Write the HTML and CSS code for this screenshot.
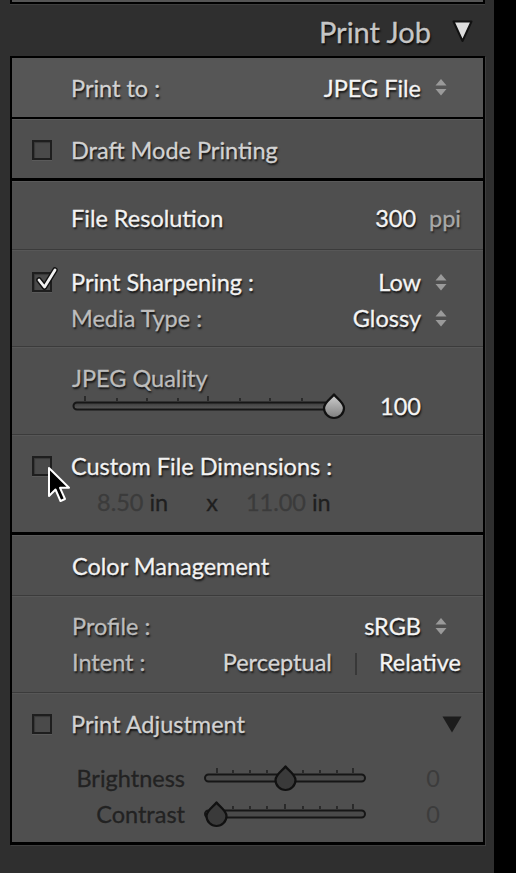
FILE: index.html
```html
<!DOCTYPE html>
<html>
<head>
<meta charset="utf-8">
<link rel="stylesheet" href="styles.css">
</head>
<body>
<div class="screen">
  <div class="main">
    <div class="prev"></div>
    <div class="header">
      <span class="title">Print Job</span>
      <svg class="htri" width="21" height="23" viewBox="0 0 21 23"><polygon points="1.5,1.5 19.5,1.5 10.5,21" fill="#dcdcdc" stroke="#111" stroke-width="2" stroke-linejoin="round"/></svg>
    </div>
    <div class="panel">
      <div class="sec s1">
        <div class="row">
          <span class="lbl c-soft">Print to :</span>
          <span class="val">JPEG File</span>
          <svg class="stepper" width="12" height="17" viewBox="0 0 12 17"><polygon points="6,0 11.5,6.5 0.5,6.5" fill="#9a9a9a"/><polygon points="0.5,10 11.5,10 6,16.5" fill="#9a9a9a"/></svg>
        </div>
      </div>
      <div class="sec s2">
        <div class="row crow">
          <span class="cbox"></span>
          <span class="lbl c-soft">Draft Mode Printing</span>
        </div>
      </div>
      <div class="sec s3">
        <div class="row">
          <span class="lbl c-bright">File Resolution</span>
          <span class="val">300</span>
          <span class="unit">ppi</span>
        </div>
      </div>
      <div class="sec s4">
        <div class="row crow">
          <span class="cbox">
            <svg class="check" width="26" height="26" viewBox="0 0 26 26"><path d="M5 13 L10.5 20 L21 3" fill="none" stroke="#111" stroke-width="5.5" stroke-linecap="round" stroke-linejoin="round"/><path d="M5 13 L10.5 20 L21 3" fill="none" stroke="#f2f2f2" stroke-width="2.8" stroke-linecap="round" stroke-linejoin="round"/></svg>
          </span>
          <span class="lbl c-bright">Print Sharpening :</span>
          <span class="val">Low</span>
          <svg class="stepper" width="12" height="17" viewBox="0 0 12 17"><polygon points="6,0 11.5,6.5 0.5,6.5" fill="#9a9a9a"/><polygon points="0.5,10 11.5,10 6,16.5" fill="#9a9a9a"/></svg>
        </div>
        <div class="row">
          <span class="lbl c-mid">Media Type :</span>
          <span class="val">Glossy</span>
          <svg class="stepper" width="12" height="17" viewBox="0 0 12 17"><polygon points="6,0 11.5,6.5 0.5,6.5" fill="#9a9a9a"/><polygon points="0.5,10 11.5,10 6,16.5" fill="#9a9a9a"/></svg>
        </div>
      </div>
      <div class="sec s5">
        <div class="row short">
          <span class="lbl c-mid lbl72">JPEG Quality</span>
        </div>
        <div class="row short">
          <svg class="jslider" width="276" height="28" viewBox="0 0 276 28">
            <defs>
              <linearGradient id="tg" x1="0" y1="0" x2="0" y2="1">
                <stop offset="0" stop-color="#3c3c3c"/>
                <stop offset="1" stop-color="#5c5c5c"/>
              </linearGradient>
              <linearGradient id="kg" x1="0" y1="0" x2="0" y2="1">
                <stop offset="0" stop-color="#d0d0d0"/>
                <stop offset="1" stop-color="#7e7e7e"/>
              </linearGradient>
            </defs>
            <g stroke="#1c1c1c" stroke-width="1.4">
              <line x1="13" y1="4" x2="13" y2="9"/>
              <line x1="45" y1="6" x2="45" y2="9"/>
              <line x1="75" y1="6" x2="75" y2="9"/>
              <line x1="106" y1="6" x2="106" y2="9"/>
              <line x1="136" y1="4" x2="136" y2="9"/>
              <line x1="168" y1="6" x2="168" y2="9"/>
              <line x1="198" y1="6" x2="198" y2="9"/>
              <line x1="230" y1="6" x2="230" y2="9"/>
            </g>
            <rect x="1.5" y="10.5" width="268" height="7" rx="3.5" fill="url(#tg)" stroke="#161616" stroke-width="2"/>
            <path d="M262 2.5 C265 6.5 272 10.5 272 16 A10 10 0 0 1 252 16 C252 10.5 259 6.5 262 2.5 Z" fill="url(#kg)" stroke="#111" stroke-width="2.2" stroke-linejoin="round"/>
          </svg>
          <span class="val v100">100</span>
        </div>
      </div>
      <div class="sec s6">
        <div class="row crow">
          <span class="cbox"></span>
          <span class="lbl c-bright">Custom File Dimensions :</span>
        </div>
        <div class="row dims">
          <span class="dnum d1">8.50</span><span class="dunit">in</span>
          <span class="dx">x</span>
          <span class="dnum d2">11.00</span><span class="dunit">in</span>
        </div>
      </div>
      <div class="sec s7">
        <div class="row">
          <span class="lbl c-bright lbl72">Color Management</span>
        </div>
      </div>
      <div class="sec s8">
        <div class="row">
          <span class="lbl c-mid lbl72">Profile :</span>
          <span class="val">sRGB</span>
          <svg class="stepper" width="12" height="17" viewBox="0 0 12 17"><polygon points="6,0 11.5,6.5 0.5,6.5" fill="#9a9a9a"/><polygon points="0.5,10 11.5,10 6,16.5" fill="#9a9a9a"/></svg>
        </div>
        <div class="row intent">
          <span class="lbl c-mid lbl72">Intent :</span>
          <span class="opt perc">Perceptual</span>
          <span class="vsep"></span>
          <span class="opt rel">Relative</span>
        </div>
      </div>
      <div class="sec s9">
        <div class="row crow">
          <span class="cbox"></span>
          <span class="lbl c-soft">Print Adjustment</span>
          <svg class="ptri" width="20" height="17" viewBox="0 0 20 17"><polygon points="0.5,0.5 19.5,0.5 10,16.5" fill="#1c1c1c"/></svg>
        </div>
        <div class="adj">
          <div class="arow">
            <span class="alabel">Brightness</span>
            <svg class="aslider" width="165" height="28" viewBox="0 0 165 28">
              <g stroke="#1c1c1c" stroke-width="1.4">
                <line x1="14" y1="4" x2="14" y2="9"/>
                <line x1="30" y1="6" x2="30" y2="9"/>
                <line x1="47" y1="6" x2="47" y2="9"/>
                <line x1="64" y1="6" x2="64" y2="9"/>
                <line x1="100" y1="6" x2="100" y2="9"/>
                <line x1="117" y1="6" x2="117" y2="9"/>
                <line x1="134" y1="6" x2="134" y2="9"/>
                <line x1="150" y1="4" x2="150" y2="9"/>
              </g>
              <rect x="2" y="10.5" width="160" height="7" rx="3.5" fill="#4a4a4a" stroke="#161616" stroke-width="2"/>
              <path d="M82.5 2.5 C85.5 6.5 92.5 10.5 92.5 16 A10 10 0 0 1 72.5 16 C72.5 10.5 79.5 6.5 82.5 2.5 Z" fill="#3a3a3a" stroke="#111" stroke-width="2.2" stroke-linejoin="round"/>
            </svg>
            <span class="aval">0</span>
          </div>
          <div class="arow">
            <span class="alabel">Contrast</span>
            <svg class="aslider" width="165" height="28" viewBox="0 0 165 28">
              <g stroke="#1c1c1c" stroke-width="1.4">
                <line x1="30" y1="6" x2="30" y2="9"/>
                <line x1="47" y1="6" x2="47" y2="9"/>
                <line x1="64" y1="6" x2="64" y2="9"/>
                <line x1="82" y1="4" x2="82" y2="9"/>
                <line x1="100" y1="6" x2="100" y2="9"/>
                <line x1="117" y1="6" x2="117" y2="9"/>
                <line x1="134" y1="6" x2="134" y2="9"/>
                <line x1="150" y1="4" x2="150" y2="9"/>
              </g>
              <rect x="2" y="10.5" width="160" height="7" rx="3.5" fill="#4a4a4a" stroke="#161616" stroke-width="2"/>
              <path d="M13.5 2.5 C16.5 6.5 23.5 10.5 23.5 16 A10 10 0 0 1 3.5 16 C3.5 10.5 10.5 6.5 13.5 2.5 Z" fill="#3a3a3a" stroke="#111" stroke-width="2.2" stroke-linejoin="round"/>
            </svg>
            <span class="aval">0</span>
          </div>
        </div>
      </div>
    </div>
  </div>
  <div class="strip"></div>
  <svg class="cursor" width="28" height="40" viewBox="0 0 28 40"><path d="M2 2 L2 30 L8.5 23.5 L13.5 35 L18 33 L13 21.8 L22 21.8 Z" fill="#000" stroke="#fff" stroke-width="2" stroke-linejoin="round"/></svg>
</div>
</body>
</html>
```
FILE: styles.css
```css
* { box-sizing: border-box; margin: 0; padding: 0; }
html, body { width: 516px; height: 873px; overflow: hidden; }
body { background: #000; font-family: Lato, "Open Sans", sans-serif; font-size: 23.5px; }

.screen { display: flex; height: 873px; position: relative; }
.main { width: 494px; height: 873px; background: #2f2f2f; }
.strip { flex: 1; background: #000; }

.prev {
  margin-left: 10px; width: 475px; height: 4px;
  background: #555;
  border-left: 2px solid #000; border-right: 2px solid #000; border-bottom: 2px solid #000;
  box-shadow: 0 1px 0 #3e3e3e;
}

.header {
  height: 52px; display: flex; justify-content: flex-end; align-items: center;
  padding: 2px 21px 0 0; gap: 21px;
}
.title { font-size: 29px; color: #c6c6c6; text-shadow: 1px 2px 2px rgba(0,0,0,.85); -webkit-text-stroke: 0.3px #c6c6c6; }
.htri { display: block; }

.panel {
  margin-left: 10px; width: 475px;
  border: 2px solid #000; border-bottom-width: 3px;
  background: #4f4f4f;
  box-shadow: 1px 1px 0 #3e3e3e;
}

.sec { display: flex; flex-direction: column; }
.s1 { height: 59px; background: #565656; justify-content: center; }
.s2 { height: 61px; border-top: 2px solid #000; box-shadow: inset 0 1px 0 #5c5c5c; padding-top: 13px; }
.s3 { height: 71px; border-top: 3px solid #000; box-shadow: inset 0 1px 0 #5a5a5a; padding-top: 19px; }
.s4 { height: 97px; border-top: 1px solid #3b3b3b; box-shadow: inset 0 1px 0 #575757; padding-top: 14px; }
.s5 { height: 88px; border-top: 1px solid #3b3b3b; box-shadow: inset 0 1px 0 #575757; padding-top: 17px; }
.s6 { height: 98px; border-top: 1px solid #3b3b3b; box-shadow: inset 0 1px 0 #575757; padding-top: 13px; }
.s7 { height: 63px; border-top: 3px solid #000; box-shadow: inset 0 1px 0 #5a5a5a; padding-top: 13px; }
.s8 { height: 97px; border-top: 1px solid #3b3b3b; box-shadow: inset 0 1px 0 #575757; padding-top: 12px; }
.s9 { height: 150px; border-top: 1px solid #3b3b3b; box-shadow: inset 0 1px 0 #575757; padding-top: 13px; }

.row {
  display: flex; align-items: center; height: 36px;
  padding-left: 59px; padding-right: 36px;
  line-height: 36px; white-space: nowrap;
}
.row.short { height: 28px; line-height: 28px; }
.crow { padding-left: 20px; }

.lbl, .val, .opt { text-shadow: 1px 2px 2px rgba(0,0,0,.85); -webkit-text-stroke: 0.3px currentColor; }
.lbl72 { margin-left: 1px; }
.c-bright { color: #f2f2f2; }
.c-soft { color: #d2d2d2; }
.c-mid { color: #bdbdbd; }

.val { margin-left: auto; color: #f4f4f4; }
.stepper { margin-left: 14px; display: block; flex: none; }
.unit { margin-left: 13px; color: #a8a8a8; text-shadow: 1px 2px 2px rgba(0,0,0,.6); -webkit-text-stroke: 0.3px currentColor; }
.s3 .row { padding-right: 22px; }

.cbox {
  width: 20px; height: 20px; flex: none; margin-right: 19px;
  border: 2px solid #1e1e1e; background: #4a4a4a;
  box-shadow: inset 1px 1px 1px rgba(0,0,0,.25), 0 1px 0 #5a5a5a;
  position: relative;
}
.check { position: absolute; left: 0; top: -7px; }

.jslider { display: block; flex: none; margin-left: 1px; }
.v100 { margin-left: auto; margin-right: 26px; }

.dims { padding-left: 85px; }
.dnum { color: #3b3b3b; -webkit-text-stroke: 0.3px currentColor; }
.dunit { color: #1f1f1f; margin-left: 6px; -webkit-text-stroke: 0.3px currentColor; }
.dx { color: #1f1f1f; margin-left: 38px; margin-right: 28px; -webkit-text-stroke: 0.3px currentColor; }

.intent { padding-right: 22px; }
.opt { color: #d6d6d6; }
.perc { margin-left: auto; }
.vsep { width: 2px; height: 22px; background: #383838; margin: 4px 22px 0 23px; }
.rel { color: #f4f4f4; }

.ptri { margin-left: auto; margin-right: -15px; display: block; }

.adj { margin-top: 18px; display: flex; flex-direction: column; }
.arow { display: flex; align-items: center; height: 36px; }
.alabel { width: 173px; text-align: right; color: #222; flex: none; -webkit-text-stroke: 0.3px currentColor; }
.aslider { display: block; flex: none; margin-left: 18px; }
.aval { margin-left: auto; margin-right: 43px; color: #3c3c3c; }

.cursor { position: absolute; left: 47px; top: 466px; }
```
